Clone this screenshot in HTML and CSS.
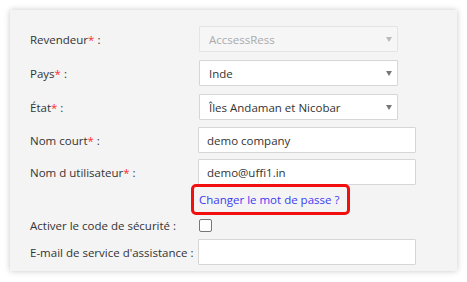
FILE: index.html
```html
<!DOCTYPE html>
<html lang="fr">
<head>
  <meta charset="UTF-8" />
  <title>Compte revendeur</title>
  <link rel="stylesheet" href="styles.css">
</head>
<body>
  <div class="panel">
    <form class="account-form" autocomplete="off">
      <div class="form-row row-1">
        <label class="field-label">Revendeur<span class="req">*</span> :</label>
        <div class="select-wrap disabled">
          <select disabled>
            <option>AccsessRess</option>
          </select>
        </div>
      </div>
      <div class="form-row row-2">
        <label class="field-label">Pays<span class="req">*</span> :</label>
        <div class="select-wrap">
          <select>
            <option>Inde</option>
          </select>
        </div>
      </div>
      <div class="form-row row-3">
        <label class="field-label">État<span class="req">*</span> :</label>
        <div class="select-wrap">
          <select>
            <option>Îles Andaman et Nicobar</option>
          </select>
        </div>
      </div>
      <div class="form-row row-4">
        <label class="field-label">Nom court<span class="req">*</span> :</label>
        <input type="text" class="text-input" value="demo company" />
      </div>
      <div class="form-row row-5">
        <label class="field-label">Nom d utilisateur<span class="req">*</span> :</label>
        <input type="text" class="text-input" value="demo@uffi1.in" />
      </div>
      <div class="link-row">
        <a href="#" class="change-pass">Changer le mot de passe ?</a>
      </div>
      <div class="form-row check-row">
        <label class="field-label">Activer le code de sécurité :</label>
        <span class="checkbox"></span>
      </div>
      <div class="form-row row-7">
        <label class="field-label">E-mail de service d'assistance :</label>
        <input type="text" class="text-input" value="" />
      </div>
      <div class="form-row row-8">
        <label class="field-label"></label>
        <input type="text" class="text-input" value="" />
      </div>
    </form>
  </div>
</body>
</html>
```

FILE: styles.css
```css
* {
  box-sizing: border-box;
}

body {
  margin: 0;
  padding: 10px;
  background: #fff;
  font-family: 'Open Sans', sans-serif;
  font-size: 11.5px;
  color: #333;
}

.panel {
  width: 447px;
  height: 261px;
  overflow: hidden;
  background: #f4f4f4;
  box-shadow: 0 0 6px rgba(0, 0, 0, 0.22);
  padding: 16px 0 0 20px;
}

.form-row {
  display: flex;
  align-items: center;
  height: 26px;
}

.row-2,
.row-3 {
  margin-top: 8px;
}

.row-4 {
  margin-top: 7px;
}

.row-5 {
  margin-top: 6px;
}

.row-7 {
  margin-top: 5px;
}

.row-8 {
  margin-top: 6px;
}

.field-label {
  width: 168px;
  flex-shrink: 0;
  color: #333;
  white-space: nowrap;
}

.req {
  color: #ff2d2d;
}

.select-wrap {
  position: relative;
  margin-left: 1px;
  width: 199px;
  height: 26px;
}

.select-wrap select {
  appearance: none;
  -webkit-appearance: none;
  width: 100%;
  height: 100%;
  padding: 0 20px 0 9px;
  font-family: 'Open Sans', sans-serif;
  font-size: 11.5px;
  color: #333;
  background: #fff;
  border: 1px solid #d6d6d6;
  border-radius: 1px;
  outline: none;
}

.select-wrap::after {
  content: '';
  position: absolute;
  right: 6px;
  top: 11px;
  border-left: 3.5px solid transparent;
  border-right: 3.5px solid transparent;
  border-top: 5px solid #777;
}

.select-wrap.disabled select {
  background: #f6f6f6;
  border-color: #e4e4e4;
  color: #aaa;
  opacity: 1;
}

.select-wrap.disabled::after {
  border-top-color: #bbb;
}

.text-input {
  width: 218px;
  height: 26px;
  padding: 0 8px;
  font-family: 'Open Sans', sans-serif;
  font-size: 11.5px;
  color: #333;
  background: #fff;
  border: 1px solid #d6d6d6;
  border-radius: 1px;
  outline: none;
}

.link-row {
  margin-top: -1px;
  padding-left: 161px;
  height: 31px;
}

.change-pass {
  display: inline-block;
  width: 159px;
  height: 31px;
  padding: 4px 5px 0 5px;
  line-height: 18px;
  color: #3b3bf2;
  text-decoration: none;
  border: 3px solid #f20f0f;
  border-radius: 5px;
}

.check-row {
  height: 18px;
  margin-top: 1px;
}

.checkbox {
  display: block;
  margin-left: 1px;
  width: 13px;
  height: 13px;
  background: #fff;
  border: 1px solid #777;
  border-radius: 2px;
}
```
